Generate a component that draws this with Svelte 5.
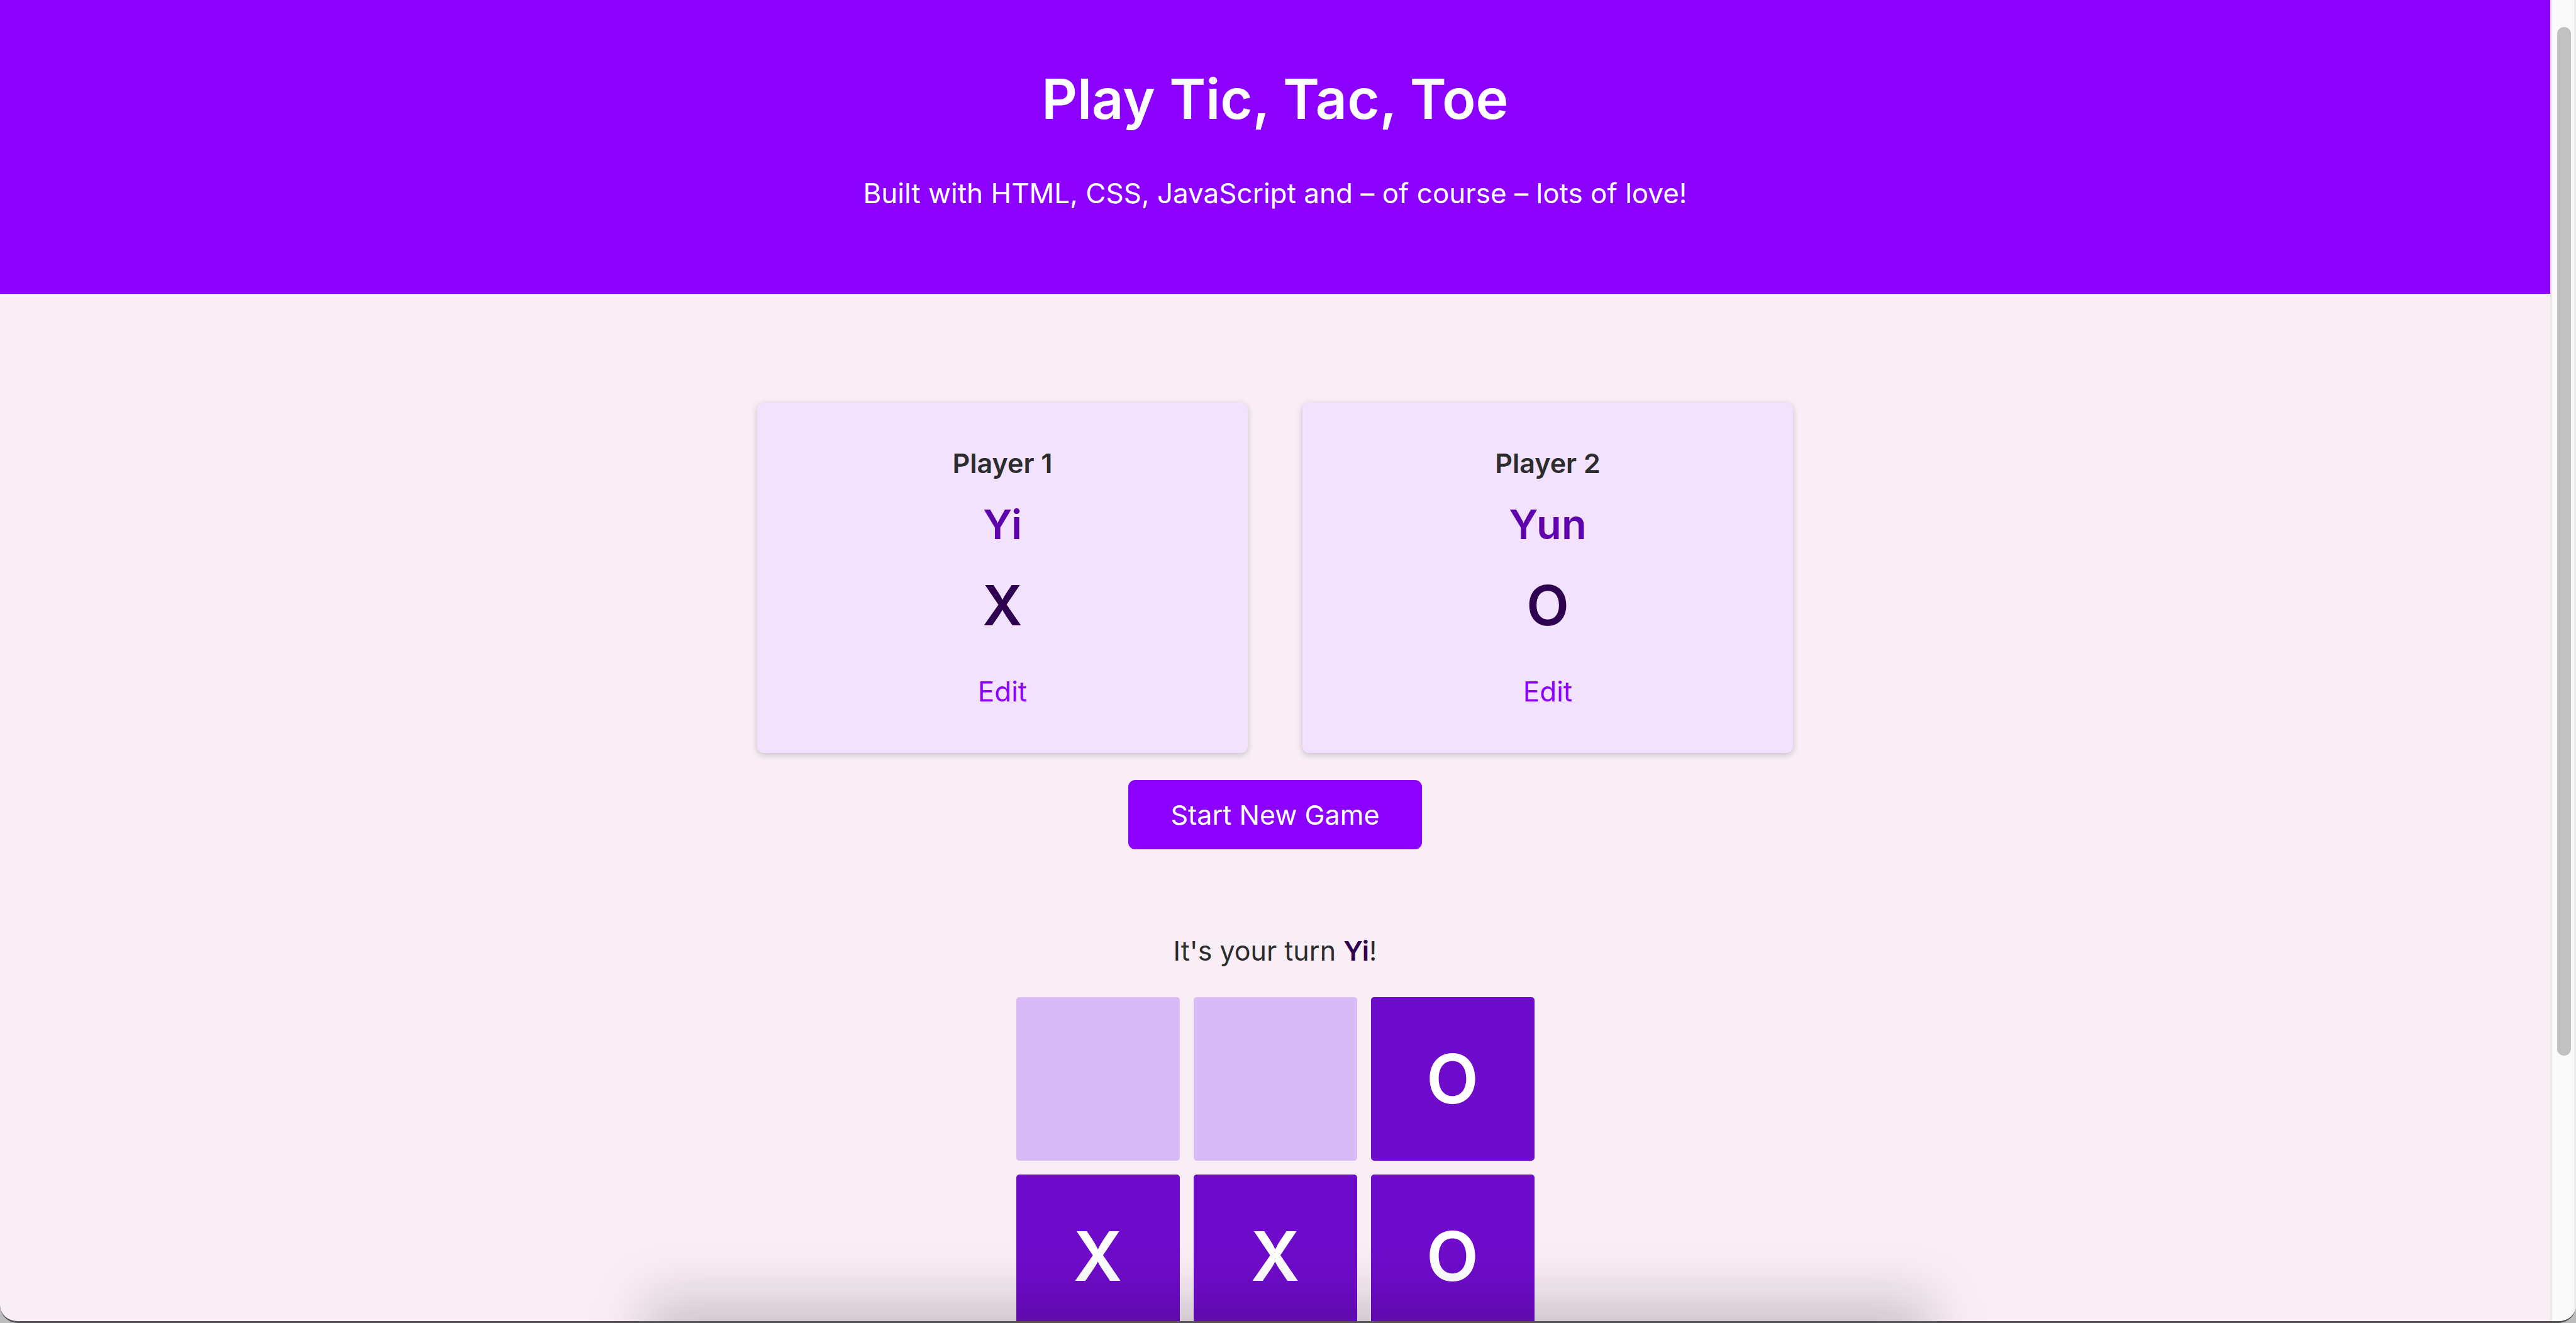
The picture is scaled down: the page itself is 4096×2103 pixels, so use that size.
<script>
  const players = [
    { id: 1, name: 'Yi', symbol: 'X' },
    { id: 2, name: 'Yun', symbol: 'O' }
  ];
  const active = players[0];

  let cells = $state(['', '', 'O', 'X', 'X', 'O']);

  function mark(index) {
    if (!cells[index]) cells[index] = active.symbol;
  }

  function restart() {
    cells = cells.map(() => '');
  }
</script>

<div class="window">
  <div class="page">
    <header>
      <h1>Play Tic, Tac, Toe</h1>
      <p>Built with HTML, CSS, JavaScript and – of course – lots of love!</p>
    </header>
    <main>
      <section class="players">
        {#each players as player (player.id)}
          <article class="player">
            <h2>Player {player.id}</h2>
            <p class="name">{player.name}</p>
            <p class="symbol">{player.symbol}</p>
            <button class="edit" type="button">Edit</button>
          </article>
        {/each}
      </section>
      <button class="start" type="button" onclick={restart}>Start New Game</button>
      <p class="turn">It's your turn <strong>{active.name}</strong>!</p>
      <section class="board">
        {#each cells as cell, i}
          <button
            class="cell"
            class:taken={cell}
            type="button"
            aria-label={`Field ${i + 1}`}
            onclick={() => mark(i)}>{cell}</button>
        {/each}
      </section>
    </main>
  </div>
  <div class="track"><div class="thumb"></div></div>
  <div class="shade"></div>
</div>

<style>
  :global(body) {
    margin: 0;
    background: #bcbcbc;
  }
  .window {
    position: relative;
    box-sizing: border-box;
    display: flex;
    height: 100vh;
    overflow: hidden;
    border-bottom: 3px solid #555355;
    border-radius: 0 0 28px 28px;
    background: #f9eef6;
    color: #2c2c2c;
    font-family: Inter, 'Liberation Sans', sans-serif;
    font-size: 43px;
    line-height: 60px;
  }
  .page {
    flex: 1;
    min-width: 0;
    text-align: center;
  }
  h1,
  h2,
  p {
    margin: 0;
  }
  header {
    display: flex;
    flex-direction: column;
    gap: 60px;
    padding: 97px 0 130px;
    background: #8c00ff;
    color: #fff;
    font-size: 44px;
  }
  h1 {
    font-size: 88px;
    line-height: 120px;
    font-weight: 600;
  }
  main {
    display: flex;
    flex-direction: column;
    align-items: center;
    padding-top: 173px;
  }
  button {
    border: 0;
    font: inherit;
    cursor: pointer;
  }
  .players {
    display: flex;
    gap: 87px;
  }
  .player {
    box-sizing: border-box;
    display: flex;
    flex-direction: column;
    align-items: center;
    width: 780px;
    padding: 66px 43px 68px;
    border-radius: 11px;
    background: #f2e2fe;
    box-shadow: 0 3px 11px rgba(0, 0, 0, 0.2);
  }
  h2 {
    font-size: 43px;
    line-height: 60px;
    font-weight: 600;
  }
  .name {
    margin-top: 28px;
    color: #5f00ad;
    font-size: 65px;
    line-height: 80px;
    font-weight: 600;
  }
  .symbol {
    margin-top: 28px;
    color: #2e004f;
    font-size: 88px;
    line-height: 120px;
    font-weight: 600;
  }
  .edit {
    margin-top: 47px;
    padding: 0;
    background: none;
    color: #8c00ff;
    font-size: 44px;
  }
  .start {
    margin-top: 43px;
    padding: 25px 68px;
    border-radius: 11px;
    background: #8c00ff;
    color: #fff;
  }
  .turn {
    margin-top: 131px;
  }
  .turn strong {
    color: #2e004f;
    font-weight: 600;
  }
  .board {
    display: grid;
    grid-template-columns: repeat(3, 260px);
    grid-auto-rows: 260px;
    gap: 22px;
    margin-top: 44px;
  }
  .cell {
    padding: 0;
    border-radius: 5px;
    background: #d7baf6;
    color: #fff;
    font-size: 108px;
    line-height: 120px;
    font-weight: 600;
  }
  .taken {
    background: #6f0ccb;
  }
  .track {
    box-sizing: border-box;
    width: 41px;
    padding: 43px 5px 0 8px;
    border-left: 3px solid #e8e8e8;
    border-right: 3px solid #ededed;
    background: #fafafa;
  }
  .thumb {
    height: 79.5%;
    border-radius: 11px;
    background: #c1c1c1;
  }
  .shade {
    position: absolute;
    left: 25%;
    right: 25%;
    bottom: -160px;
    height: 200px;
    border-radius: 20px;
    background: rgba(0, 0, 0, 0.17);
    filter: blur(42px);
    pointer-events: none;
  }
</style>
